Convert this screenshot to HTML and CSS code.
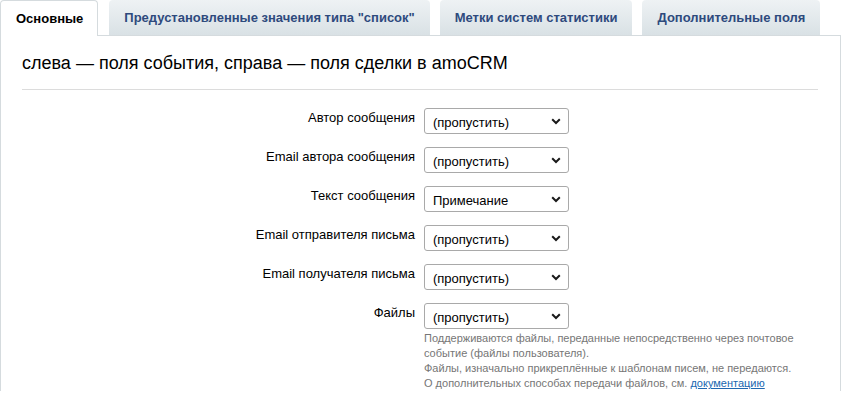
FILE: index.html
```html
<!DOCTYPE html>
<html lang="ru">
<head>
    <meta charset="UTF-8">
    <title>Настройки</title>
    <link rel="stylesheet" href="styles.css">
</head>
<body>
    <div class="tabs">
        <div class="tab active">Основные</div>
        <div class="tab">Предустановленные значения типа "список"</div>
        <div class="tab">Метки систем статистики</div>
        <div class="tab">Дополнительные поля</div>
    </div>
    <div class="panel">
        <div class="title">слева — поля события, справа — поля сделки в amoCRM</div>
        <div class="form-grid">
            <div class="label">Автор сообщения</div>
            <div class="field">
                <div class="select-wrap">
                    <select><option>(пропустить)</option></select>
                    <svg class="chev" width="10" height="7" viewBox="0 0 10 7"><path d="M1.2 1.3 L5 5 L8.8 1.3" fill="none" stroke="#1a1a1a" stroke-width="2"/></svg>
                </div>
            </div>

            <div class="label">Email автора сообщения</div>
            <div class="field">
                <div class="select-wrap">
                    <select><option>(пропустить)</option></select>
                    <svg class="chev" width="10" height="7" viewBox="0 0 10 7"><path d="M1.2 1.3 L5 5 L8.8 1.3" fill="none" stroke="#1a1a1a" stroke-width="2"/></svg>
                </div>
            </div>

            <div class="label">Текст сообщения</div>
            <div class="field">
                <div class="select-wrap">
                    <select><option>Примечание</option></select>
                    <svg class="chev" width="10" height="7" viewBox="0 0 10 7"><path d="M1.2 1.3 L5 5 L8.8 1.3" fill="none" stroke="#1a1a1a" stroke-width="2"/></svg>
                </div>
            </div>

            <div class="label">Email отправителя письма</div>
            <div class="field">
                <div class="select-wrap">
                    <select><option>(пропустить)</option></select>
                    <svg class="chev" width="10" height="7" viewBox="0 0 10 7"><path d="M1.2 1.3 L5 5 L8.8 1.3" fill="none" stroke="#1a1a1a" stroke-width="2"/></svg>
                </div>
            </div>

            <div class="label">Email получателя письма</div>
            <div class="field">
                <div class="select-wrap">
                    <select><option>(пропустить)</option></select>
                    <svg class="chev" width="10" height="7" viewBox="0 0 10 7"><path d="M1.2 1.3 L5 5 L8.8 1.3" fill="none" stroke="#1a1a1a" stroke-width="2"/></svg>
                </div>
            </div>

            <div class="label">Файлы</div>
            <div class="field">
                <div class="select-wrap">
                    <select><option>(пропустить)</option></select>
                    <svg class="chev" width="10" height="7" viewBox="0 0 10 7"><path d="M1.2 1.3 L5 5 L8.8 1.3" fill="none" stroke="#1a1a1a" stroke-width="2"/></svg>
                </div>
                <div class="hint">
                    Поддерживаются файлы, переданные непосредственно через почтовое событие (файлы пользователя).<br>
                    Файлы, изначально прикреплённые к шаблонам писем, не передаются.<br>
                    О дополнительных способах передачи файлов, см. <a href="#">документацию</a>
                </div>
            </div>
        </div>
    </div>
</body>
</html>
```

FILE: styles.css
```css
body {
    margin: 0;
    font-family: "Liberation Sans", Arial, sans-serif;
    background-color: #fff;
    color: #000;
}
.tabs {
    display: flex;
    align-items: flex-end;
    height: 35px;
}
.tab {
    height: 35px;
    box-sizing: border-box;
    padding: 0 15px;
    margin-right: 10px;
    line-height: 35px;
    font-size: 13px;
    font-weight: bold;
    color: #2e4a7d;
    background: linear-gradient(to bottom, #eef2f4, #d9e1e5);
    border-radius: 4px 4px 0 0;
    white-space: nowrap;
}
.tab.active {
    position: relative;
    z-index: 1;
    height: 36px;
    margin-bottom: -1px;
    margin-right: 11px;
    padding: 0 14px 0 15px;
    color: #000;
    background: #fff;
    border: 1px solid #d5dbde;
    border-bottom: none;
    line-height: 35px;
}
.panel {
    border: 1px solid #d5dbde;
    border-bottom: none;
    padding: 17px 22px 0 21px;
}
.title {
    font-size: 18px;
    line-height: 21px;
    padding-bottom: 15px;
    border-bottom: 1px solid #dcdcdc;
    margin-bottom: 18px;
}
.form-grid {
    display: grid;
    grid-template-columns: 50% 50%;
    row-gap: 13px;
}
.label {
    text-align: right;
    padding-right: 5px;
    padding-top: 2px;
    font-size: 13px;
    line-height: 16px;
}
.field {
    padding-left: 4px;
    padding-right: 5px;
}
.select-wrap {
    position: relative;
    width: 145px;
    height: 26px;
}
.select-wrap select {
    appearance: none;
    -webkit-appearance: none;
    width: 145px;
    height: 26px;
    margin: 0;
    padding: 2px 0 0 8px;
    border: 1px solid #a9a9a9;
    border-radius: 3px;
    background: #fff;
    font-family: "Liberation Sans", Arial, sans-serif;
    font-size: 13px;
    color: #000;
}
.chev {
    position: absolute;
    right: 8px;
    top: 10px;
    pointer-events: none;
}
.hint {
    margin-top: 2px;
    font-size: 11px;
    line-height: 15px;
    color: #767676;
}
.hint a {
    color: #2067b0;
}
```
